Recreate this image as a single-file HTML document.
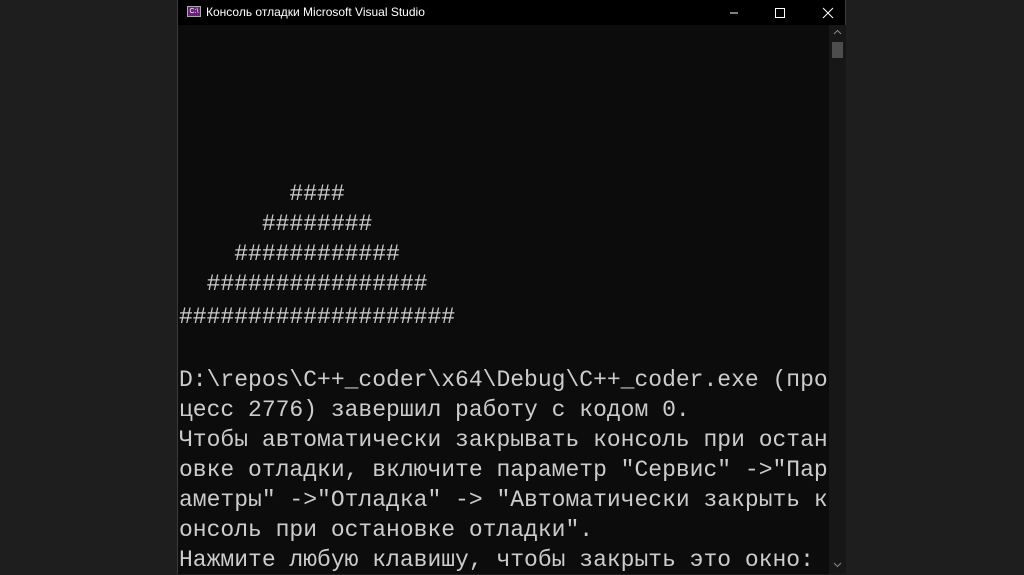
<!DOCTYPE html>
<html><head><meta charset="utf-8"><style>
html,body{margin:0;padding:0;width:1024px;height:574px;overflow:hidden;background:#1e1e1e;}
.win{position:absolute;left:177px;top:0;width:669px;height:574px;background:#0c0c0c;border-left:1px solid #3a3a3a;border-right:1px solid #3a3a3a;box-sizing:border-box;}
.title{position:absolute;left:0;top:0;width:100%;height:25px;background:#000;}
.title .t{position:absolute;left:28px;top:5px;font:12px "Liberation Sans","Noto Sans CJK SC",sans-serif;color:#fff;}
.ico{position:absolute;left:9px;top:6px;width:14px;height:11px;background:#68217a;border:1px solid #aaa;box-sizing:border-box;font:7px "Liberation Sans",sans-serif;color:#fff;line-height:9px;text-align:center;}
.sb{position:absolute;left:651px;top:25px;width:17px;height:549px;background:#171717;}
.thumb{position:absolute;left:3px;top:17px;width:11px;height:16px;background:#4d4d4d;}
pre{position:absolute;left:1px;margin:0;font:23px/30px "Liberation Mono","DejaVu Sans Mono",monospace;color:#cccccc;}
</style></head><body>
<div class="win">
<div class="title"><div class="ico">C:\</div><div class="t">Консоль отладки Microsoft Visual Studio</div>
<svg style="position:absolute;left:552px;top:6px" width="110" height="14"><line x1="0" y1="7" x2="8" y2="7" stroke="#fff"/><rect x="45.5" y="2.5" width="9" height="9" fill="none" stroke="#fff"/><path d="M93 2L103 12M103 2L93 12" stroke="#fff"/></svg>
</div>
<div class="sb"><svg style="position:absolute;left:4px;top:4px" width="9" height="6"><path d="M1 5L4.5 1.5L8 5" stroke="#888" fill="none"/></svg><div class="thumb"></div><svg style="position:absolute;left:4px;top:537px" width="9" height="6"><path d="M1 1L4.5 4.5L8 1" stroke="#888" fill="none"/></svg></div>
<pre style="top:179px">        ####
      ########
    ############
  ################</pre>
<pre style="top:302px">####################</pre>
<pre style="top:365px">D:\repos\C++_coder\x64\Debug\C++_coder.exe (про
цесс 2776) завершил работу с кодом 0.
Чтобы автоматически закрывать консоль при остан
овке отладки, включите параметр "Сервис" -&gt;"Пар
аметры" -&gt;"Отладка" -&gt; "Автоматически закрыть к
онсоль при остановке отладки".
Нажмите любую клавишу, чтобы закрыть это окно:</pre>
</div>
</body></html>
